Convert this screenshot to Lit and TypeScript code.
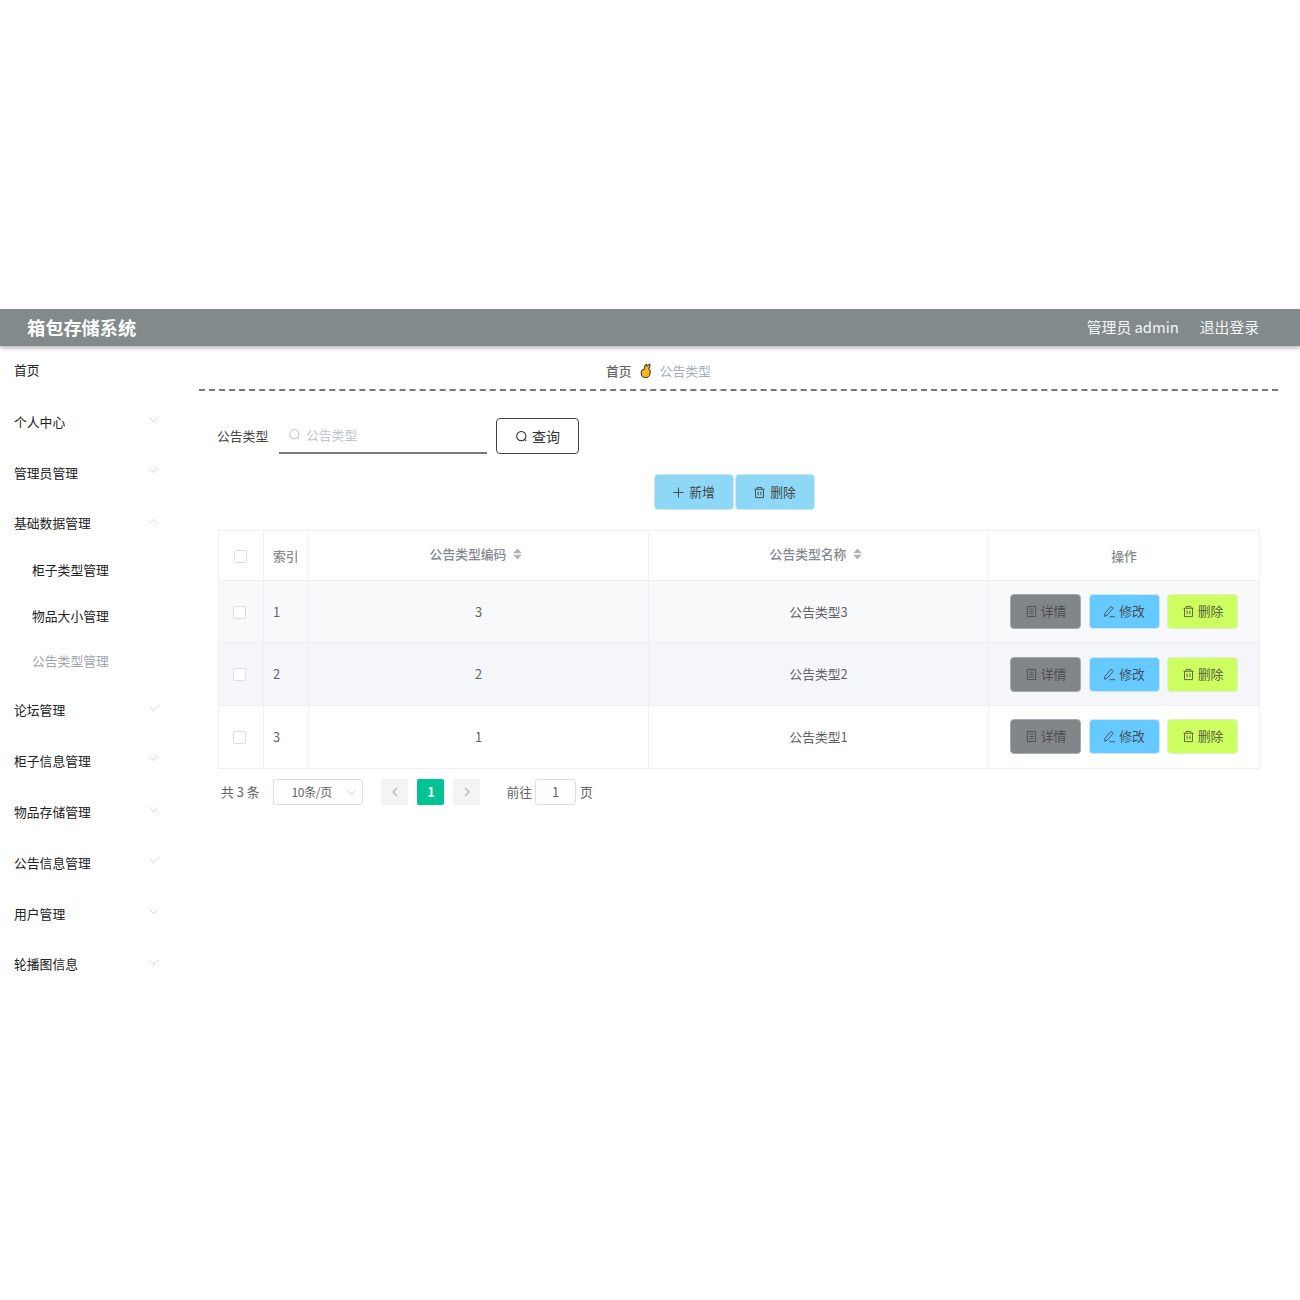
import { LitElement, html, css, svg } from "lit";
import { customElement } from "lit/decorators.js";

const chevD = svg`<path d="M1.5 1.5 L6.5 6.5 L11.5 1.5" fill="none" stroke="currentColor" stroke-width="1"/>`;
const chevU = svg`<path d="M1.5 6.5 L6.5 1.5 L11.5 6.5" fill="none" stroke="currentColor" stroke-width="1"/>`;
const searchI = html`<svg class="ic" viewBox="0 0 14 14"><circle cx="6.8" cy="6.6" r="5" fill="none" stroke="currentColor" stroke-width="1.1"/><path d="M10.5 10.3 L12 11.8" stroke="currentColor" stroke-width="1.1"/></svg>`;
const trash = html`<svg class="ic" viewBox="0 0 14 14" fill="none" stroke="currentColor" stroke-width="1"><path d="M1.5 3.5H12.5M4.5 3.2V1.5H9.5V3.2M2.7 3.5V12.5H11.3V3.5M5.5 6V10M8.5 6V10"/></svg>`;
const plus = html`<svg class="ic" viewBox="0 0 14 14" fill="none" stroke="currentColor" stroke-width="1"><path d="M7 1.5V12.5M1.5 7H12.5"/></svg>`;
const doc = html`<svg class="ic" viewBox="0 0 14 14" fill="none" stroke="currentColor" stroke-width="1"><path d="M2.5 1.5H11.5V12.5H2.5ZM4.8 4.5H9.2M4.8 7H9.2M4.8 9.5H9.2"/></svg>`;
const edit = html`<svg class="ic" viewBox="0 0 14 14" fill="none" stroke="currentColor" stroke-width="1"><path d="M8.5 1.5L11 3.5L4.5 11L1.8 12.2L2 9.2ZM7 12.6H13"/></svg>`;
const hand = html`<svg class="hand" viewBox="0 0 12 15"><path d="M1.6 12.5 C1 10.5 1.2 8.5 2.2 6.8 L4.6 6 L4.8 3 L6.4 .9 L7 3.2 L9.4 1 L10.3 2 L8.6 6 L10.2 7.2 L10 11 C9.8 13.2 8.2 14.5 5.8 14.5 C3.8 14.5 2.2 14 1.6 12.5Z" fill="#f7b81e" stroke="#2b2414" stroke-width="1"/></svg>`;

const menu: [string, string, number][] = [
  ["首页", "", 0],
  ["个人中心", "d", 0],
  ["管理员管理", "d", 0],
  ["基础数据管理", "u", 0],
  ["柜子类型管理", "", 1],
  ["物品大小管理", "", 1],
  ["公告类型管理", "", 2],
  ["论坛管理", "d", 0],
  ["柜子信息管理", "d", 0],
  ["物品存储管理", "d", 0],
  ["公告信息管理", "d", 0],
  ["用户管理", "d", 0],
  ["轮播图信息", "d", 0],
];
const rows = [["1", "3", "公告类型3"], ["2", "2", "公告类型2"], ["3", "1", "公告类型1"]];
const sort = html`<svg class="sort" viewBox="0 0 9 12"><path d="M4.5 .4L8.8 5.2H.2ZM4.5 11.6L.2 6.8H8.8Z" fill="#aeb2ba"/></svg>`;

@customElement("app-root")
export class AppRoot extends LitElement {
  static styles = css`
    :host { display: block; padding-top: 309px; min-height: 991px; background: #fff; font-family: "Noto Sans CJK SC", "Liberation Sans", sans-serif; font-size: 12.8px; color: #333; box-sizing: border-box; }
    * { box-sizing: border-box; }
    .ic { width: 13px; height: 13px; flex: none; }
    .top { height: 37px; background: #828a8c; box-shadow: 0 2px 4px rgba(0,0,0,.3); display: flex; align-items: center; padding: 0 41px 2px 27px; color: #fff; position: relative; }
    .title { font-size: 18.2px; font-weight: 700; flex: 1; }
    .user { font-size: 14.8px; color: #f4f6f6; margin-left: 21px; }
    .body { display: flex; }
    .side { width: 199px; flex: none; }
    .mi { display: flex; align-items: center; height: 50.9px; padding: 0 40px 0 14px; color: #222; justify-content: space-between; }
    .mi svg { width: 11px; height: 7px; color: #c9ccd4; margin-top: -3px; }
    .mi.first { height: 50px; padding-bottom: 3px; }
    .mi.tight { height: 49.7px; }
    .mi.sub { height: 45.5px; padding-left: 32px; padding-bottom: 1px; }
    .mi.on { color: #a0a4ab; }
    .mi.gap { height: 51px; padding-top: 1px; }
    .main { flex: 1; padding-right: 22px; }
    .crumb { height: 45px; border-bottom: 2px dashed #777; display: flex; align-items: center; padding: 6px 0 0 407px; color: #666; font-weight: 500; }
    .crumb .last { color: #a4acc0; font-weight: 400; }
    .hand { width: 12px; height: 15px; margin: 0 8px; }
    .search { display: flex; align-items: center; padding: 27px 0 0 18px; }
    .lab { width: 62px; color: #444; padding-bottom: 2px; }
    .inp { width: 208px; height: 36px; border-bottom: 2px solid #777; display: flex; align-items: center; gap: 5px; padding: 0 0 2px 9px; color: #c0c4cc; }
    .btnq { width: 83px; height: 36px; margin-left: 9px; border: 1px solid #444; border-radius: 4px; display: flex; align-items: center; justify-content: center; gap: 4px; color: #333; font-size: 14px; }
    .btnq .ic { color: #222; }
    .acts { display: flex; justify-content: center; gap: 1px; padding: 20px 0; margin-left: -9px; }
    .act { width: 80px; height: 36px; background: #8cd8f6; border: 1px solid #d4e4ee; border-radius: 4px; display: flex; align-items: center; justify-content: center; gap: 4px; color: #444; padding-bottom: 2px; }
    .act .ic { margin-top: 2px; }
    .tbl { margin: 0 0 0 19px; width: 1042px; border: 1px solid #eef0f6; }
    .tr { display: grid; grid-template-columns: 45px 45px 340px 340px 1fr; border-bottom: 1px solid #eef0f6; height: 62.4px; background: #fff; }
    .tr:last-child { border-bottom: 0; }
    .tr.h { height: 50px; font-weight: 500; }
    .tr.a { background: #f8f9fb; }
    .tr.b { background: #f5f6f9; }
    .c { display: flex; align-items: center; justify-content: center; border-right: 1px solid #eef0f6; color: #606266; padding-bottom: 1px; }
    .tr.h .c { color: #85898f; }
    .c:last-child { border-right: 0; }
    .c.l { justify-content: flex-start; padding-left: 9px; }
    .c.hh { padding: 0 5px 5px 0; gap: 7px; }
    .c.ck { padding: 1px 3px 0 0; }
    .tr.h .c.ck { padding: 1px 1px 0 0; }
    .sort { width: 9px; height: 12px; margin-top: 1px; }
    .cb { width: 13px; height: 13px; border: 1px solid #dcdfe6; border-radius: 2px; background: #fff; }
    .ops { gap: 7.5px; padding-bottom: 0; }
    .op { width: 71px; height: 35px; border: 1px solid #e4e7ed; border-radius: 4px; display: flex; align-items: center; justify-content: center; gap: 3px; color: #555; padding-bottom: 2px; }
    .op .ic { margin-top: 2px; }
    .op.x { background: #818789; border-color: #a5aaad; color: #4a4d50; }
    .op.y { background: #66c9ff; border-color: #d0e6f4; color: #444f58; }
    .op.z { background: #ccff5f; border-color: #e3ecd0; color: #5a6040; }
    .pg { display: flex; align-items: center; padding: 0 0 0 22px; margin-top: 10px; color: #606266; height: 26px; }
    .pg > span, .pg .num, .pg .pb.on, .sel > span { padding-bottom: 2px; }
    .sel { width: 90px; height: 26px; margin-left: 14px; border: 1px solid #dcdfe6; border-radius: 3px; display: flex; align-items: center; justify-content: space-between; padding: 0 5px 0 17px; color: #606266; font-size: 12px; letter-spacing: -.3px; }
    .sel svg { width: 11px; height: 7px; color: #c0c4cc; }
    .pb { width: 27px; height: 26px; background: #f4f4f5; display: flex; align-items: center; justify-content: center; border-radius: 2px; color: #b0b4bc; margin-left: 9px; }
    .pb svg { width: 6px; height: 10px; }
    .pb.on { background: #00c292; color: #fff; font-weight: 700; }
    .pb.first { margin-left: 18px; }
    .go { margin-left: 26px; }
    .num { width: 41px; height: 26px; border: 1px solid #dcdfe6; border-radius: 3px; margin: 0 4px 0 3px; display: flex; align-items: center; justify-content: center; }
  `;
  render() {
    return html`
      <div class="top">
        <div class="title">箱包存储系统</div>
        <div class="user">管理员 admin</div>
        <div class="user">退出登录</div>
      </div>
      <div class="body">
        <div class="side">
          ${menu.map(([t, c, s], i) => html`<div class="mi ${i === 0 ? "first" : ""} ${i === 3 ? "tight" : ""} ${s ? "sub" : ""} ${s === 2 ? "on" : ""} ${i === 7 ? "gap" : ""}">
            <span>${t}</span>
            ${c ? html`<svg viewBox="0 0 13 8">${c === "d" ? chevD : chevU}</svg>` : ""}
          </div>`)}
        </div>
        <div class="main">
          <div class="crumb"><span>首页</span>${hand}<span class="last">公告类型</span></div>
          <div class="search">
            <span class="lab">公告类型</span>
            <div class="inp">${searchI}<span>公告类型</span></div>
            <div class="btnq">${searchI}<span>查询</span></div>
          </div>
          <div class="acts">
            <div class="act">${plus}<span>新增</span></div>
            <div class="act">${trash}<span>删除</span></div>
          </div>
          <div class="tbl">
            <div class="tr h">
              <div class="c ck"><span class="cb"></span></div>
              <div class="c l">索引</div>
              <div class="c hh"><span>公告类型编码</span>${sort}</div>
              <div class="c hh"><span>公告类型名称</span>${sort}</div>
              <div class="c">操作</div>
            </div>
            ${rows.map((r, i) => html`<div class="tr ${i === 0 ? "a" : i === 1 ? "b" : ""}">
              <div class="c ck"><span class="cb"></span></div>
              <div class="c l">${r[0]}</div>
              <div class="c">${r[1]}</div>
              <div class="c">${r[2]}</div>
              <div class="c ops">
                <div class="op x">${doc}<span>详情</span></div>
                <div class="op y">${edit}<span>修改</span></div>
                <div class="op z">${trash}<span>删除</span></div>
              </div>
            </div>`)}
          </div>
          <div class="pg">
            <span>共 3 条</span>
            <div class="sel"><span>10条/页</span><svg viewBox="0 0 13 8">${chevD}</svg></div>
            <div class="pb first"><svg viewBox="0 0 6 10"><path d="M5 1L1 5L5 9" fill="none" stroke="currentColor" stroke-width="1.3"/></svg></div>
            <div class="pb on">1</div>
            <div class="pb"><svg viewBox="0 0 6 10"><path d="M1 1L5 5L1 9" fill="none" stroke="currentColor" stroke-width="1.3"/></svg></div>
            <span class="go">前往</span>
            <div class="num">1</div>
            <span>页</span>
          </div>
        </div>
      </div>
    `;
  }
}
